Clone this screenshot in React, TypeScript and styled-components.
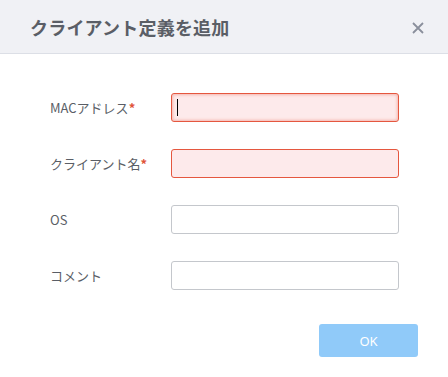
import React from 'react';
import styled, { createGlobalStyle } from 'styled-components';

const GlobalStyle = createGlobalStyle`
  html, body {
    margin: 0;
    padding: 0;
    background: #fff;
  }
  body {
    font-family: "Noto Sans CJK JP", "Noto Sans", sans-serif;
  }
`;

const Dialog = styled.div`
  width: 448px;
  height: 377px;
  background: #fff;
  display: flex;
  flex-direction: column;
`;

const Header = styled.div`
  height: 53px;
  border-bottom: 1px solid #dcdfe6;
  background: #f0f1f5;
  display: flex;
  align-items: center;
  justify-content: space-between;
  padding: 0 24px 0 30px;
`;

const Title = styled.h2`
  margin: 0;
  font-size: 18px;
  font-weight: 700;
  color: #5a5e66;
  letter-spacing: 0.2px;
`;

const CloseButton = styled.button`
  border: none;
  background: none;
  padding: 0;
  margin-top: 2px;
  width: 12px;
  height: 12px;
  display: flex;
  cursor: pointer;
`;

const Form = styled.div`
  display: flex;
  flex-direction: column;
  gap: 27px;
  padding: 39px 49px 0 50px;
`;

const Row = styled.div`
  display: flex;
  align-items: center;
  height: 29px;
`;

const Label = styled.label`
  width: 121px;
  font-size: 13px;
  color: #5a5e66;
`;

const Required = styled.span`
  color: #e0533a;
  font-weight: 700;
`;

const Input = styled.input<{ $error?: boolean; $focused?: boolean }>`
  box-sizing: border-box;
  width: 228px;
  height: 29px;
  border-radius: 3px;
  border: 1px solid ${(p) => (p.$error ? '#e5573f' : '#c4c7cc')};
  background: ${(p) => (p.$error ? '#fdeaeb' : '#fff')};
  box-shadow: ${(p) => (p.$focused ? 'inset 0 0 3px 1px rgba(229, 87, 63, 0.35)' : 'none')};
  padding: 0 6px;
  font-size: 13px;
  outline: none;
`;

const Caret = styled.span`
  position: absolute;
  left: 6px;
  top: 6px;
  width: 1px;
  height: 17px;
  background: #000;
`;

const InputWrap = styled.div`
  position: relative;
  display: flex;
`;

const Footer = styled.div`
  display: flex;
  justify-content: flex-end;
  padding: 34px 30px 0 0;
`;

const OkButton = styled.button`
  width: 99px;
  height: 33px;
  border: none;
  border-radius: 3px;
  background: #90caf9;
  color: #fff;
  font-family: "Noto Sans", sans-serif;
  font-size: 13px;
`;

const fields = [
  { label: 'MACアドレス', required: true, focused: true },
  { label: 'クライアント名', required: true, focused: false },
  { label: 'OS', required: false, focused: false },
  { label: 'コメント', required: false, focused: false },
];

const App = () => {
  return (
    <Dialog>
      <GlobalStyle />
      <Header>
        <Title>クライアント定義を追加</Title>
        <CloseButton aria-label='close'>
          <svg width='12' height='12' viewBox='0 0 12 12'>
            <path d='M1 1L11 11M11 1L1 11' stroke='#8a8f9c' strokeWidth='1.8' />
          </svg>
        </CloseButton>
      </Header>
      <Form>
        {fields.map((f) => (
          <Row key={f.label}>
            <Label>
              {f.label}
              {f.required && <Required>*</Required>}
            </Label>
            <InputWrap>
              <Input $error={f.required} $focused={f.focused} readOnly />
              {f.focused && <Caret />}
            </InputWrap>
          </Row>
        ))}
      </Form>
      <Footer>
        <OkButton>OK</OkButton>
      </Footer>
    </Dialog>
  );
};

export default App;
